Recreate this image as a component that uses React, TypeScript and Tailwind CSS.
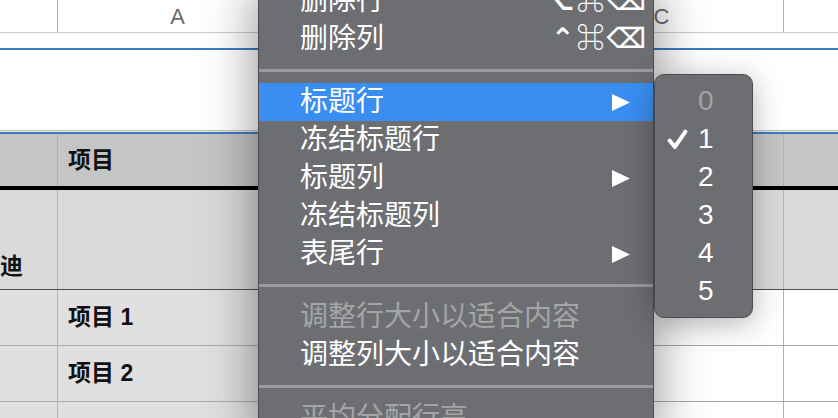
import React from "react";

const font = "font-['Liberation_Sans','Noto_Sans_CJK_SC','DejaVu_Sans',sans-serif]";

type MenuItem =
    | { kind: "sep" }
    | { kind: "item"; label: string; shortcut?: string; sub?: boolean; active?: boolean; disabled?: boolean };

const menuItems: MenuItem[] = [
    {kind: "item", label: "删除行", shortcut: "⌥⌘⌫"},
    {kind: "item", label: "删除列", shortcut: "⌃⌘⌫"},
    {kind: "sep"},
    {kind: "item", label: "标题行", sub: true, active: true},
    {kind: "item", label: "冻结标题行"},
    {kind: "item", label: "标题列", sub: true},
    {kind: "item", label: "冻结标题列"},
    {kind: "item", label: "表尾行", sub: true},
    {kind: "sep"},
    {kind: "item", label: "调整行大小以适合内容", disabled: true},
    {kind: "item", label: "调整列大小以适合内容"},
    {kind: "sep"},
    {kind: "item", label: "平均分配行高", disabled: true},
];

const Arrow = () => (
    <svg width="18" height="17" viewBox="0 0 18 17" className="shrink-0">
        <polygon points="0,0 18,8.5 0,17" fill="white"/>
    </svg>
);

const Check = () => (
    <svg width="21" height="21" viewBox="0 0 20 20" className="shrink-0">
        <path d="M2.5 11 L7.5 17 L17.5 2.5" stroke="white" strokeWidth="3.8" fill="none" strokeLinecap="round"
              strokeLinejoin="round"/>
    </svg>
);

const ContextMenu = () => (
    <div
        className="absolute left-[258px] top-[-19px] w-[396px] bg-[#6d6e71] border border-[#4c4d4f] shadow-[0_6px_50px_rgba(0,0,0,0.45)] z-10">
        {menuItems.map((item, i) =>
            item.kind === "sep" ? (
                <div key={i} className="h-[25px] flex items-center">
                    <div className="h-[3px] w-full bg-[#9a9b9d]"/>
                </div>
            ) : (
                <div
                    key={i}
                    className={`h-[38px] flex items-center pl-[41px] text-[28px] leading-none ${
                        item.active ? "bg-[#3a8ef2]" : ""
                    } ${item.disabled ? "text-[#a4a5a7]" : "text-white"}`}
                >
                    <span className="flex-1">{item.label}</span>
                    {item.shortcut && (
                        <span className="pr-[5px] text-[28px] font-bold tracking-[2px]">{item.shortcut}</span>
                    )}
                    {item.sub && (
                        <span className="pr-[23px] flex items-center"><Arrow/></span>
                    )}
                </div>
            )
        )}
    </div>
);

const SubMenu = () => (
    <div
        className="absolute left-[654px] top-[74px] w-[99px] h-[244px] rounded-[10px] bg-[#6d6e71] border border-[#4c4d4f] shadow-[0_6px_30px_rgba(0,0,0,0.3)] py-[7px] z-20">
        {["0", "1", "2", "3", "4", "5"].map((n) => (
            <div key={n} className="h-[38px] flex items-center text-[28px] leading-none">
                <span className="w-[43px] flex justify-end pr-[10px]">{n === "1" && <Check/>}</span>
                <span className={n === "0" ? "text-[#a2a3a5]" : "text-white"}>{n}</span>
            </div>
        ))}
    </div>
);

const Cell = ({w, children, className = ""}: { w: string; children?: React.ReactNode; className?: string }) => (
    <div className={`${w} shrink-0 h-full border-r border-[#b3b3b3] ${className}`}>{children}</div>
);

const App = () => {
    return (
        <div className={`relative w-[838px] h-[418px] overflow-hidden bg-white ${font}`}>
            {/* column headers */}
            <div className="flex h-[33px] border-b border-[#cbcbcb] text-[#6a6a6a] text-[22px]">
                <Cell w="w-[58px]"/>
                <Cell w="w-[240px]" className="flex items-center justify-center">A</Cell>
                <Cell w="w-[242px]" className="flex items-center justify-center">B</Cell>
                <Cell w="w-[244px]" className="flex items-center justify-center">C</Cell>
                <div className="flex-1"/>
            </div>
            <div className="h-[15px]"/>
            <div className="h-[2px] bg-[#3a7cc3]"/>
            <div className="h-[80px]"/>
            <div className="h-[1px] bg-[#c2c2c2]"/>
            <div className="h-[1px] bg-[#e6e6e6]"/>
            <div className="h-[2px] bg-[#3a7cc3]"/>

            {/* header row */}
            <div className="flex h-[52px] bg-[#c4c5c5] text-[23px] font-bold text-[#111]">
                <Cell w="w-[58px]"/>
                <Cell w="w-[240px]" className="flex items-center pl-[10px]">项目</Cell>
                <Cell w="w-[242px]"/>
                <Cell w="w-[244px]"/>
                <div className="flex-1"/>
            </div>
            <div className="h-[4px] bg-black"/>

            {/* body rows */}
            <div className="flex h-[100px] bg-[#d9d9d9] border-b border-[#4e4e4e] text-[23px] font-bold text-[#111]">
                <Cell w="w-[58px]" className="flex items-end pb-[6px]">迪</Cell>
                <Cell w="w-[240px]"/>
                <Cell w="w-[242px]"/>
                <Cell w="w-[244px]"/>
                <div className="flex-1"/>
            </div>
            {["项目 1", "项目 2", ""].map((t, i) => (
                <div key={i} className="flex h-[56px] border-b border-[#a9a9a9] text-[23px] font-bold text-[#111]">
                    <Cell w="w-[58px]" className="bg-[#e0e0e0]"/>
                    <Cell w="w-[240px]" className="bg-[#e0e0e0] flex items-center pl-[10px]">{t}</Cell>
                    <Cell w="w-[242px]" className="bg-[#e0e0e0]"/>
                    <Cell w="w-[244px]" className="bg-white"/>
                    <div className="flex-1"/>
                </div>
            ))}

            <ContextMenu/>
            <SubMenu/>
        </div>
    );
};

export default App;
